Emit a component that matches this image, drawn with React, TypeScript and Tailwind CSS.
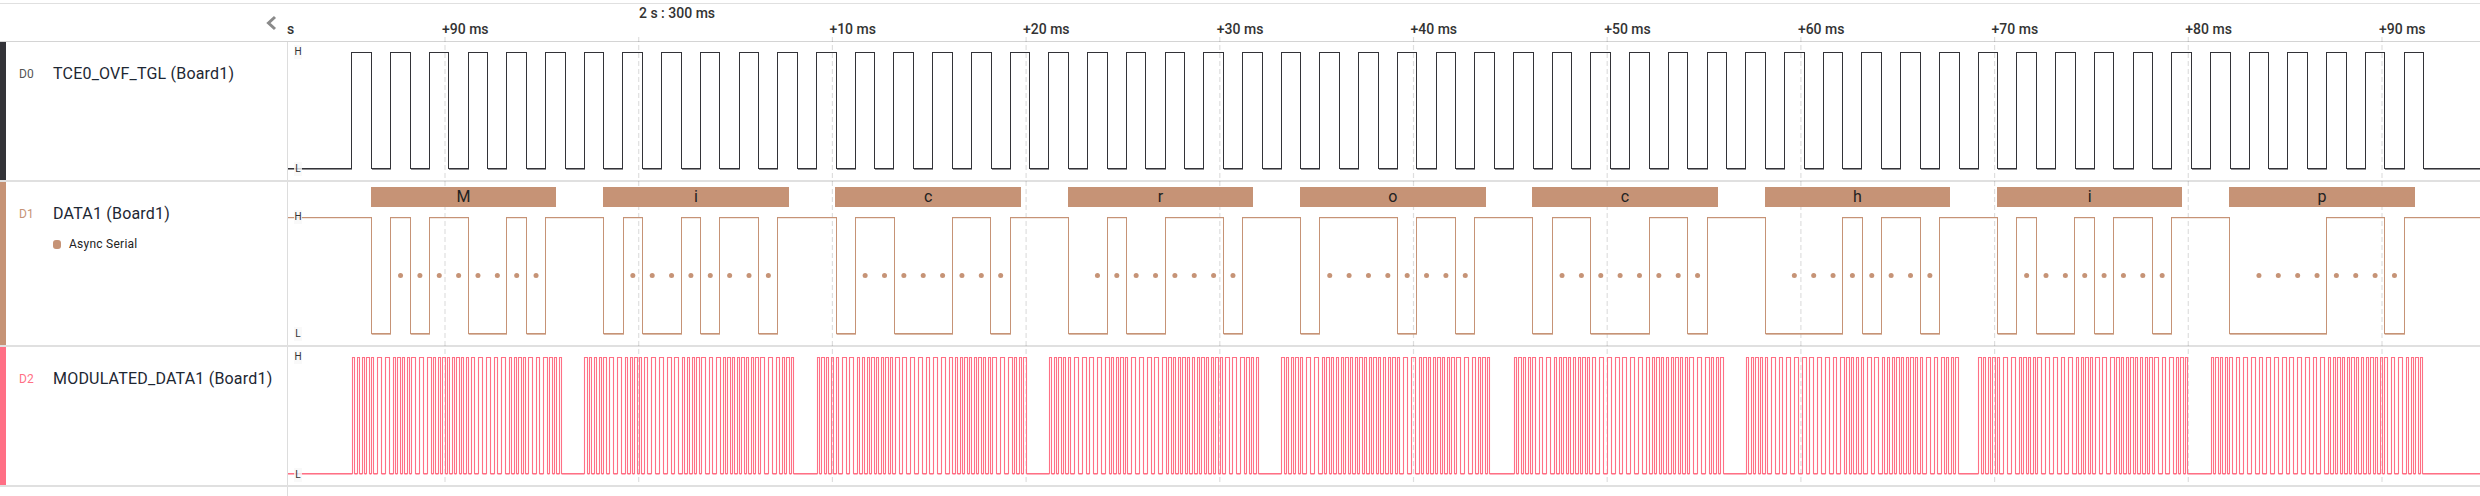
import React from "react";

const GRID = Array.from({ length: 11 }, (_, i) => 445 + 193.7 * i);
const LEFT = 288;
const BIT = 19.36;
const FRAME = 232.3;
const X0 = 371.5;
const TEXT = "Microchip";
const DARK = "#333338";
const BROWN = "#c69376";
const PINK = "#ff7085";

const TICKS: { label: string; x: number }[] = [
  { label: "+90 ms", x: 442 },
  { label: "+10 ms", x: 829.4 },
  { label: "+20 ms", x: 1023 },
  { label: "+30 ms", x: 1216.8 },
  { label: "+40 ms", x: 1410.5 },
  { label: "+50 ms", x: 1604.2 },
  { label: "+60 ms", x: 1797.9 },
  { label: "+70 ms", x: 1991.6 },
  { label: "+80 ms", x: 2185.3 },
  { label: "+90 ms", x: 2379 },
];

type Edge = [number, number];
const px = (x: number) => Math.round(x) + 0.5;

function build(start: number, high: number, low: number, edges: number[], end = 2480) {
  let d = `M ${LEFT} ${start === 1 ? high : low}`;
  let s = start;
  const segs: Edge[] = [];
  let prev = LEFT;
  for (const e of edges) {
    const x = px(e);
    d += ` H ${x}`;
    if (s === 0) segs.push([prev, x]);
    s = 1 - s;
    d += ` V ${s === 1 ? high : low}`;
    prev = x;
  }
  d += ` H ${end}`;
  if (s === 0) segs.push([prev, end]);
  return { d, segs };
}

const clockEdges: number[] = [];
for (let i = 0; i < 54; i++) {
  const r = 351.4 + 38.72 * i;
  clockEdges.push(r, r + 19.6);
}

function bitsOf(c: string) {
  const code = c.charCodeAt(0);
  const out: number[] = [];
  for (let i = 0; i < 8; i++) out.push((code >> i) & 1);
  return out;
}

const dataEdges: number[] = [];
TEXT.split("").forEach((c, k) => {
  const x = X0 + FRAME * k;
  const seq = [0, ...bitsOf(c), 1];
  let cur = 1;
  seq.forEach((b, i) => {
    if (b !== cur) {
      dataEdges.push(x + i * BIT - 0.6);
      cur = b;
    }
  });
});

const modEdges: number[] = [];
TEXT.split("").forEach((c, k) => {
  const x = X0 + FRAME * k;
  const seq = [1, 0, ...bitsOf(c), 1];
  const from = x - BIT;
  const to = x + 9.85 * BIT;
  let pos = from;
  let high = true;
  modEdges.push(pos);
  while (pos < to) {
    const idx = Math.min(seq.length - 1, Math.floor((pos - from) / BIT));
    pos += seq[idx] === 1 ? 2.35 : 3.85;
    if (pos >= to && !high) break;
    modEdges.push(pos);
    high = !high;
  }
  if (high) modEdges.push(pos + 2);
});

function Wave({ h, high, low, edges, color, start, shadowHigh, strokeW }: { h: number; high: number; low: number; edges: number[]; color: string; start: number; shadowHigh?: boolean; strokeW?: number }) {
  const { d, segs } = build(start, high, low, edges);
  return (
    <svg className="absolute left-0 top-0 overflow-visible" width={2480 - LEFT} height={h} viewBox={`${LEFT} 0 ${2480 - LEFT} ${h}`} shapeRendering={strokeW ? "geometricPrecision" : "crispEdges"}>
      <path d={segs.map(([a, b]) => `M ${a} ${low + 1} H ${b}`).join(" ")} stroke={color} strokeOpacity={0.55} fill="none" />
      {shadowHigh && <path d={d} transform="translate(0 1)" stroke={color} strokeOpacity={0.22} fill="none" />}
      <path d={d} stroke={color} strokeWidth={strokeW ?? 1} fill="none" />
    </svg>
  );
}

function Level({ children, y }: { children: string; y: number }) {
  return (
    <span className="absolute left-[6px] w-[8px] h-[14px] bg-[#f8f8f8]/80 text-center text-[10px] leading-[14px] text-[#333]" style={{ top: y - 7 }}>
      {children}
    </span>
  );
}

function Row({ id, idColor, bar, name, children, h, sub }: { id: string; idColor: string; bar: string; name: string; children: React.ReactNode; h: string; sub?: boolean }) {
  return (
    <div className={`flex w-full border-b-2 border-[#e0e0e0] ${h}`}>
      <div className="flex w-[288px] shrink-0 border-r border-[#dddddd]">
        <div className="w-[6px] h-full" style={{ background: bar }} />
        <div className="flex flex-1 pl-[13px] pt-[22px] items-start">
          <span className="w-[34px] text-[12px] leading-[20px] tracking-[0.2px]" style={{ color: idColor }}>{id}</span>
          <div className="flex flex-col">
            <span className="text-[16px] leading-[20px] tracking-[0.2px] text-[#1d2733] whitespace-nowrap">{name}</span>
            {sub && (
              <div className="flex items-center gap-[8px] mt-[12px]">
                <span className="w-[8px] h-[9px] rounded-[3px] bg-[#c69376]" />
                <span className="text-[12px] leading-[16px] tracking-[0.25px] text-[#222]">Async Serial</span>
              </div>
            )}
          </div>
        </div>
      </div>
      <div className="relative flex-1">{children}</div>
    </div>
  );
}

export default function App() {
  return (
    <div className="relative w-[2480px] h-[496px] bg-white overflow-hidden font-['Roboto',sans-serif]">
      <div className="h-[3px]" />
      <div className="h-px bg-[#e0e0e0]" />
      <div className="relative flex h-[38px] border-b border-[#d4d4d4]">
        <div className="flex w-[288px] shrink-0 justify-end pr-[11px] pt-[11px]">
          <svg width="12" height="16" viewBox="0 0 12 16" fill="none">
            <path d="M10 2 L3.5 8 L10 14" stroke="#8a8a8a" strokeWidth="3" />
          </svg>
        </div>
        <span className="absolute left-[287px] top-[17px] text-[14px] leading-[16px] font-medium text-[#333]">s</span>
        <span className="absolute left-[639px] top-[1px] text-[14px] leading-[16px] font-medium text-[#333] whitespace-nowrap">2 s : 300 ms</span>
        {TICKS.map((t) => (
          <span key={t.x} className="absolute top-[17px] text-[14px] leading-[16px] font-medium text-[#333] whitespace-nowrap" style={{ left: t.x }}>
            {t.label}
          </span>
        ))}
      </div>

      <svg className="absolute left-0 top-[37px]" width="2480" height="447" viewBox="0 0 2480 447">
        {GRID.map((x) => (
          <line key={x} x1={x} x2={x} y1={0} y2={447} stroke="#000000" strokeOpacity="0.13" strokeWidth="1.2" strokeDasharray="5 3" />
        ))}
      </svg>

      <Row id="D0" idColor="#555" bar={DARK} name="TCE0_OVF_TGL (Board1)" h="h-[140px]">
        <Wave h={138} high={10.5} low={126.5} edges={clockEdges} color={DARK} start={0} />
        <Level y={10}>H</Level>
        <Level y={127}>L</Level>
      </Row>
      <Row id="D1" idColor={BROWN} bar={BROWN} name="DATA1 (Board1)" h="h-[165px]" sub>
        <Wave h={163} high={35.5} low={151.5} edges={dataEdges} color={BROWN} start={1} shadowHigh />
        <svg className="absolute left-0 top-0" width={2480 - LEFT} height={163} viewBox={`${LEFT} 0 ${2480 - LEFT} 163`}>
          {TEXT.split("").flatMap((_, k) =>
            Array.from({ length: 8 }, (_, i) => (
              <circle key={`${k}-${i}`} cx={X0 + FRAME * k + (1.5 + i) * BIT} cy={93.5} r={2.5} fill={BROWN} />
            )),
          )}
        </svg>
        {TEXT.split("").map((c, k) => (
          <div
            key={k}
            className="absolute top-[5px] h-[20px] w-[185.5px] bg-[#c69376] text-center text-[16px] leading-[20px] text-[#222]"
            style={{ left: X0 - 0.7 + FRAME * k - LEFT }}
          >
            {c}
          </div>
        ))}
        <Level y={35}>H</Level>
        <Level y={152}>L</Level>
      </Row>
      <Row id="D2" idColor={PINK} bar="#ff6f85" name="MODULATED_DATA1 (Board1)" h="h-[140px]">
        <Wave h={138} high={10.5} low={126.5} edges={modEdges} color={PINK} start={0} strokeW={1.1} />
        <Level y={10}>H</Level>
        <Level y={128}>L</Level>
      </Row>
      <div className="flex h-[10px]">
        <div className="w-[288px] border-r border-[#dddddd]" />
      </div>
    </div>
  );
}
